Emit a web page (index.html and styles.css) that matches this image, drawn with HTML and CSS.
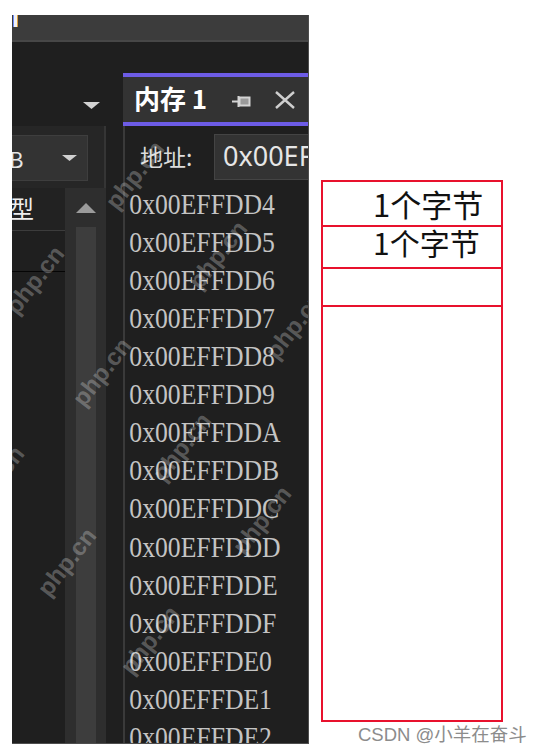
FILE: index.html
```html
<!DOCTYPE html>
<html lang="zh">
<head>
<meta charset="utf-8">
<link rel="stylesheet" href="styles.css">
</head>
<body>
<div class="page">
  <div class="shot">
    <div class="titlebar"><span class="caret"></span></div>
    <div class="tabrow">
      <div class="tabrow-left">
        <svg class="tri-down" width="17" height="7" viewBox="0 0 17 7"><path d="M0 0H17L8.5 7Z" fill="#d2d2d2"/></svg>
      </div>
      <div class="tab">
        <span class="tab-title">内存 1</span>
        <svg class="pin" width="19" height="13" viewBox="0 0 19 13"><path d="M0 6.5H6M6.5 1V12" stroke="#d4d4d4" stroke-width="2" fill="none"/><rect x="7.5" y="2.5" width="10" height="8" fill="#9a9a9a" stroke="#d4d4d4" stroke-width="2"/></svg>
        <svg class="close" width="22" height="18" viewBox="0 0 22 18"><path d="M2 1L20 17M20 1L2 17" stroke="#cfcfcf" stroke-width="2.4" fill="none"/></svg>
      </div>
    </div>
    <div class="panes">
      <div class="left">
        <div class="ltool">
          <div class="combo"><span class="combo-text">B</span><svg width="15" height="6" viewBox="0 0 15 6"><path d="M0 0H15L7.5 6Z" fill="#d0d0d0"/></svg></div>
        </div>
        <div class="lgrid">
          <div class="gcol">
            <div class="ghead">型</div>
            <div class="grow"></div>
          </div>
          <div class="vscroll">
            <svg class="up" width="20" height="10" viewBox="0 0 20 10"><path d="M0 10H20L10 0Z" fill="#9b9b9b"/></svg>
            <div class="thumb"></div>
          </div>
        </div>
      </div>
      <div class="right">
        <div class="addr">
          <span class="addr-label">地址:</span>
          <div class="addr-input">0x00EFFDD4</div>
        </div>
        <div class="mem">
          <div>0x00EFFDD4</div>
          <div>0x00EFFDD5</div>
          <div>0x00EFFDD6</div>
          <div>0x00EFFDD7</div>
          <div>0x00EFFDD8</div>
          <div>0x00EFFDD9</div>
          <div>0x00EFFDDA</div>
          <div>0x00EFFDDB</div>
          <div>0x00EFFDDC</div>
          <div>0x00EFFDDD</div>
          <div>0x00EFFDDE</div>
          <div>0x00EFFDDF</div>
          <div>0x00EFFDE0</div>
          <div>0x00EFFDE1</div>
          <div>0x00EFFDE2</div>
        </div>
      </div>
    </div>
    <span class="wm wm1">php.cn</span>
    <span class="wm wm2">php.cn</span>
    <span class="wm wm3">php.cn</span>
    <span class="wm wm4">php.cn</span>
    <span class="wm wm5">php.cn</span>
    <span class="wm wm6">php.cn</span>
    <span class="wm wm7">php.cn</span>
    <span class="wm wm8">php.cn</span>
    <span class="wm wm9">php.cn</span>
    <span class="wm wm10">php.cn</span>
  </div>
  <div class="annot">
    <div class="box">
      <div class="brow brow1">1个字节</div>
      <div class="brow brow2">1个字节</div>
      <div class="brow brow3"></div>
    </div>
    <div class="csdn">CSDN @小羊在奋斗</div>
  </div>
</div>
</body>
</html>
```
FILE: styles.css
```css
* { box-sizing: border-box; margin: 0; padding: 0; }
body { background: #fff; font-family: "Noto Sans CJK SC", "Noto Sans", sans-serif; }
.page { display: flex; align-items: flex-start; padding: 15px 0 0 12px; }

.shot {
  position: relative; width: 297px; height: 729px; background: #1f1f1f;
  overflow: hidden; display: flex; flex-direction: column;
  border-right: 1px solid #4e4e4e; border-bottom: 1px solid #4e4e4e;
}
.titlebar { flex: none; height: 27px; background: #3c3c3c; border-bottom: 2px solid #474747; }
.caret { display: block; width: 3px; height: 12px; margin-left: 2px; background: #f2f2f2; box-shadow: -1px 0 0 #6b8cff, 1px 0 0 #e0a040; }

.tabrow { flex: none; height: 84px; display: flex; align-items: flex-end; }
.tabrow-left { width: 112px; height: 84px; padding: 60px 0 0 71px; }
.tri-down { display: block; }
.tab {
  width: 190px; height: 53px; background: #333;
  border-top: 4px solid #6d5ce6; border-bottom: 4px solid #6d5ce6;
  display: flex; align-items: center; padding-left: 11px;
}
.tab-title { font-size: 26px; font-weight: 700; color: #fff; line-height: 30px; margin-top: -3px; }
.pin { margin-left: 25px; margin-top: 3px; }
.close { margin-left: 23px; }

.panes { flex: 1; display: flex; min-height: 0; }
.left { width: 111px; flex: none; display: flex; flex-direction: column; }
.ltool { height: 62px; width: 94px; background: #262626; border-right: 2px solid #353535; padding-top: 9px; }
.combo {
  width: 76px; height: 46px; background: #333; border: 1px solid #3e3e3e; border-left: none;
  display: flex; align-items: center; overflow: hidden;
}
.combo-text { flex: 1; font-size: 22px; color: #e6e6e6; margin-left: -3px; line-height: 30px; }
.combo svg { margin-right: 10px; }
.lgrid { flex: 1; display: flex; width: 94px; }
.gcol { width: 53px; }
.ghead {
  height: 43px; border-bottom: 1px solid #3c3c3c; background: #222;
  font-size: 24px; color: #eee; line-height: 40px; text-indent: -2px; overflow: hidden;
}
.grow { height: 41px; border-bottom: 1px solid #050505; }
.vscroll { width: 41px; background: #2e2e2e; display: flex; flex-direction: column; align-items: center; }
.up { margin-top: 15px; flex: none; }
.thumb { width: 20px; flex: 1; margin-top: 14px; background: #3d3d3d; }

.right { flex: 1; min-width: 0; overflow: hidden; border-left: 2px solid #3a3a3a; display: flex; flex-direction: column; }
.addr { height: 58.7px; flex: none; display: flex; align-items: flex-start; padding-top: 8px; }
.addr-label { width: 89px; flex: none; padding-left: 15px; font-size: 23px; line-height: 44px; color: #dcdcdc; }
.addr-input {
  flex: none; width: 160px; height: 46px; background: #333; border: 1px solid #444;
  padding-left: 8px; font-family: "Noto Sans", sans-serif; font-size: 27px; line-height: 42px;
  color: #e6e6e6; white-space: nowrap; overflow: hidden;
}
.mem {
  padding-left: 5px; font-family: "Liberation Serif", serif; font-size: 29.5px;
  line-height: 38.1px; color: #c4c4c4; transform: scaleX(0.87); transform-origin: 0 0;
  white-space: nowrap;
}

.wm {
  position: absolute; font-family: "Liberation Sans", sans-serif; font-weight: 700;
  font-size: 24px; color: rgba(255, 255, 255, 0.27); white-space: nowrap;
  transform: translate(-50%, -50%) rotate(-52deg);
}
.wm1 { left: 123px; top: 160px; }
.wm2 { left: 206px; top: 240px; }
.wm3 { left: 23px; top: 265px; }
.wm4 { left: 90px; top: 357px; }
.wm5 { left: 283px; top: 310px; }
.wm6 { left: 170px; top: 432px; }
.wm7 { left: -17px; top: 465px; }
.wm8 { left: 250px; top: 505px; }
.wm9 { left: 55px; top: 547px; }
.wm10 { left: 138px; top: 625px; }

.annot { margin-left: 12px; margin-top: 165px; width: 215px; }
.box { width: 182px; height: 542px; border: 2px solid #e8112d; }
.brow { border-bottom: 2px solid #e8112d; padding-left: 50px; color: #111; white-space: nowrap; }
.brow1 { height: 45px; font-size: 31px; line-height: 43px; }
.brow2 { height: 42px; font-size: 30px; line-height: 30px; }
.brow3 { height: 38px; }
.csdn {
  margin: 2px 0 0 37px; font-family: "Liberation Sans", "Noto Sans CJK SC", sans-serif;
  font-size: 18.5px; line-height: 22px; color: #8c8c8c; white-space: nowrap;
}
```
